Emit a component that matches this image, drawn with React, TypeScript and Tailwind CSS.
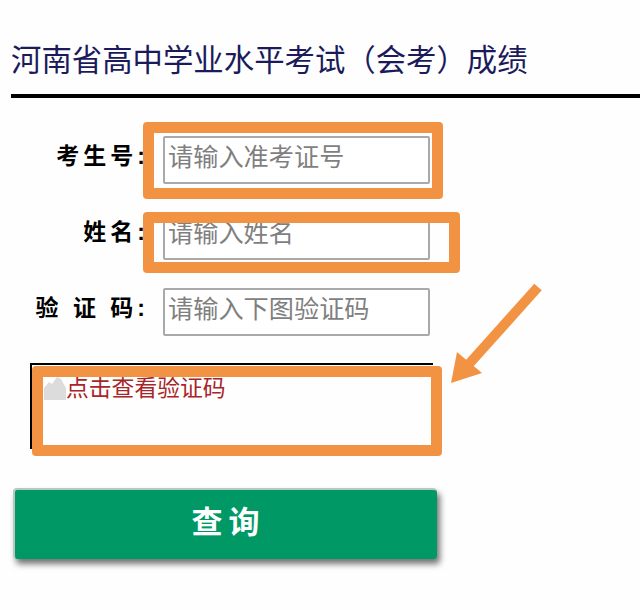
const CJK = "font-['Liberation_Sans','Noto_Sans_CJK_SC',sans-serif]";

const FIELDS = [
  { label: "考生号:", hint: "请输入准考证号", labelClass: "tracking-[4px]", rowClass: "mt-[38px]" },
  { label: "姓名:", hint: "请输入姓名", labelClass: "tracking-[4px]", rowClass: "mt-[28px]" },
  { label: "验 证 码:", hint: "请输入下图验证码", labelClass: "tracking-[4px]", rowClass: "mt-[28px]" },
];

function BrokenImage() {
  return (
    <svg width="22" height="24" viewBox="0 0 22 24" className="shrink-0">
      <rect width="22" height="24" fill="#dcdcdc" />
      <path d="M0 12 L5 6 L8 8 L13 1 L17 3 L22 12 L22 0 L0 0 Z" fill="#ffffff" />
    </svg>
  );
}

function Arrow() {
  return (
    <svg width="110" height="110" viewBox="0 0 110 110" className="absolute left-[445px] top-[280px]">
      <path d="M93 7 L24 84" stroke="#f29344" strokeWidth="10" fill="none" />
      <path d="M6 103 L12 72 L37 93 Z" fill="#f29344" />
    </svg>
  );
}

export default function App() {
  return (
    <div className={`relative w-[640px] h-[610px] overflow-hidden bg-[#fefefe] ${CJK}`}>
      <h1 className="pl-[11px] pt-[38px] text-[30.4px] leading-[44px] font-normal text-[#1b1b5c] whitespace-nowrap">
        河南省高中学业水平考试（会考）成绩
      </h1>
      <div className="ml-[11px] mt-[12px] h-[4px] bg-black" />

      <div className="flex flex-col">
        {FIELDS.map((f) => (
          <div key={f.hint} className={`flex items-center ${f.rowClass}`}>
            <label className={`w-[163px] pr-[14px] pb-[7px] text-right text-[23px] font-bold text-black whitespace-nowrap ${f.labelClass}`}>
              {f.label}
            </label>
            <input
              placeholder={f.hint}
              className="w-[267px] h-[48px] pl-[3px] pr-[4px] pb-[6px] bg-white rounded-[2px] border-2 border-[#a9a9a9] text-[25.2px] outline-none placeholder:text-[#7f7f7f]"
            />
          </div>
        ))}
      </div>

      {/* captcha box */}
      <div className="ml-[30px] mt-[27px] w-[403px] h-[86px] border-t-2 border-l-2 border-black pl-[12px] pt-[11px]">
        <div className="flex items-start">
          <BrokenImage />
          <span className="text-[22.8px] leading-[24px] text-[#a8262a] whitespace-nowrap">点击查看验证码</span>
        </div>
      </div>

      <button className="ml-[13px] mt-[39px] w-[424px] h-[71px] pb-[3px] pl-[5px] rounded-[4px] bg-[#009966] border-t-2 border-l-2 border-[#b8c8c0] text-[31px] font-bold tracking-[6px] text-white shadow-[3px_5px_6px_rgba(0,0,0,0.55)]">
        查询
      </button>

      {/* orange annotations drawn over the form */}
      <div className="absolute left-[143px] top-[122px] w-[300px] h-[77px] rounded-[4px] border-[11px] border-[#f29344]" />
      <div className="absolute left-[143px] top-[212px] w-[317px] h-[61px] rounded-[4px] border-[11px] border-[#f29344]" />
      <div className="absolute left-[32px] top-[366px] w-[410px] h-[90px] rounded-[4px] border-[11px] border-[#f29344]" />
      <Arrow />
    </div>
  );
}
